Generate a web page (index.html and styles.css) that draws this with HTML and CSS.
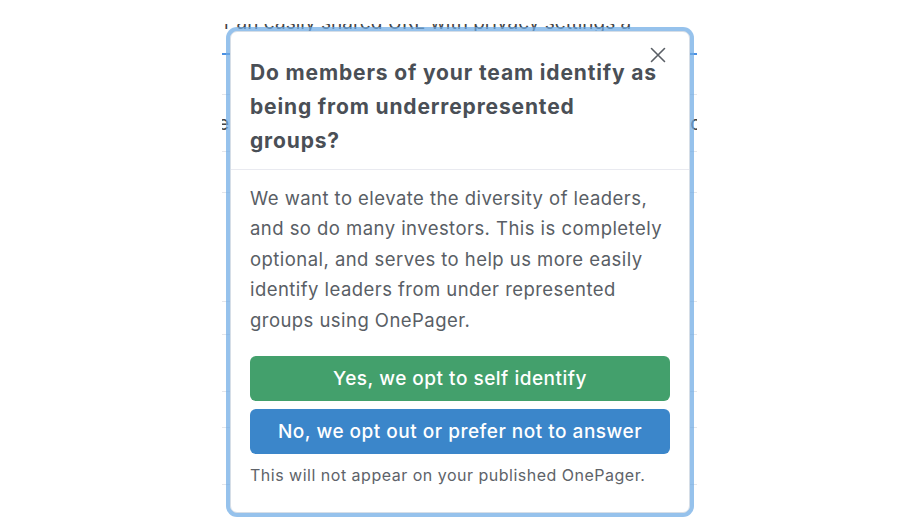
FILE: index.html
```html
<!DOCTYPE html>
<html lang="en">
<head>
<meta charset="utf-8">
<title>Identify</title>
<link rel="stylesheet" href="styles.css">
</head>
<body>
<div class="stage">
  <div class="page">
    <div class="row row-top"><span class="bg-text">r an easily shared URL with privacy settings a</span></div>
    <div class="row r2"></div>
    <div class="row r3"><span class="frag">e</span><span class="frag">c</span></div>
    <div class="row r4"></div>
    <div class="row r5"></div>
    <div class="row r6"></div>
    <div class="row r7"></div>
    <div class="row r8"></div>
    <div class="row r9"></div>
  </div>

  <div class="popover" role="dialog">
    <button class="close" aria-label="Close">
      <svg width="16" height="16" viewBox="0 0 16 16"><path d="M1.5 1.5 L14.5 14.5 M14.5 1.5 L1.5 14.5" stroke="#5a5f66" stroke-width="1.6" fill="none" stroke-linecap="round"/></svg>
    </button>
    <div class="pop-header">
      <h3 class="title">Do members of your team identify as being from underrepresented groups?</h3>
    </div>
    <div class="pop-body">
      <p class="desc">We want to elevate the diversity of leaders, and so do many investors. This is completely optional, and serves to help us more easily identify leaders from under represented groups using OnePager.</p>
      <div class="actions">
        <button class="btn btn-green">Yes, we opt to self identify</button>
        <button class="btn btn-blue">No, we opt out or prefer not to answer</button>
      </div>
      <p class="note">This will not appear on your published OnePager.</p>
    </div>
  </div>
</div>
</body>
</html>
```
FILE: styles.css
```css
* { box-sizing: border-box; }
html, body { margin: 0; padding: 0; background: #fff; }
body { font-family: Inter, "Noto Sans", "Liberation Sans", sans-serif; }

.stage {
  position: relative;
  width: 916px;
  height: 532px;
  overflow: hidden;
}

/* background page peeking from beneath the popover */
.page {
  margin-left: 222px;
  margin-top: 24px;
  width: 475px;
  height: 470px;
  overflow: hidden;
  display: flex;
  flex-direction: column;
  color: #333;
}
.row {
  border-bottom: 1px solid #e4e6ea;
  display: flex;
  justify-content: space-between;
  align-items: center;
  flex: none;
}
.row-top { height: 31px; border-bottom: 2px solid #4a90e2; align-items: flex-start; }
.bg-text {
  display: block;
  margin-top: -12px;
  margin-left: 2px;
  font-size: 19px;
  line-height: 22px;
  white-space: nowrap;
  color: #444;
}
.r2 { height: 40px; }
.r3 { height: 57px; }
.frag { font-size: 19px; color: #444; margin: 0 -4px; }
.r4 { height: 41px; }
.r5 { height: 109px; }
.r6 { height: 33px; }
.r7 { height: 57px; }
.r8 { height: 36px; }
.r9 { height: 57px; }

/* popover */
.popover {
  position: absolute;
  left: 230px;
  top: 31px;
  width: 460px;
  background: #fff;
  border: 1px solid #d6dee7;
  border-radius: 7px;
  box-shadow: 0 0 0 4px rgba(110, 170, 228, 0.72);
}
.close {
  position: absolute;
  right: 22px;
  top: 14px;
  width: 18px;
  height: 18px;
  padding: 1px;
  border: 0;
  background: none;
  display: flex;
}
.pop-header {
  padding: 24px 24px 11px 19px;
  border-bottom: 1px solid #e9eaf0;
}
.title {
  margin: 0;
  font-size: 21px;
  line-height: 34px;
  font-weight: 700;
  letter-spacing: 0.85px;
  color: #4a4f56;
}
.pop-body {
  padding: 13px 19px 25px;
}
.desc {
  margin: 0;
  font-size: 18.5px;
  line-height: 30.4px;
  letter-spacing: 0.45px;
  color: #595e65;
}
.actions {
  display: flex;
  flex-direction: column;
  gap: 8px;
  margin-top: 21px;
}
.btn {
  height: 45px;
  border: 0;
  border-radius: 6px;
  color: #fff;
  font-family: inherit;
  font-size: 19px;
  font-weight: 500;
  letter-spacing: 0.5px;
  cursor: pointer;
}
.btn-green { background: #43a06c; }
.btn-blue { background: #3b86ca; }
.note {
  margin: 9px 0 0;
  font-size: 16px;
  line-height: 24px;
  letter-spacing: 0.5px;
  color: #5e6369;
}
```
